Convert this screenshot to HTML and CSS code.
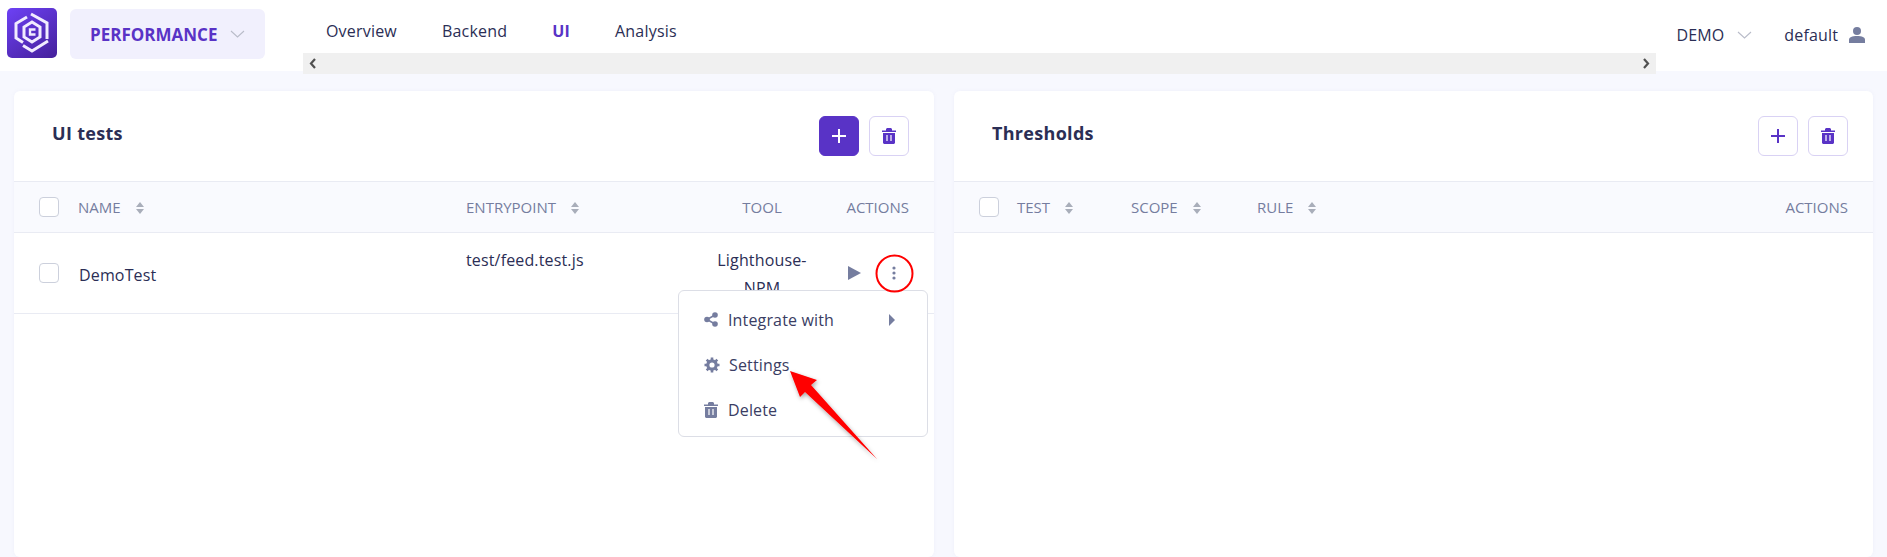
FILE: index.html
```html
<!DOCTYPE html>
<html lang="en">
  <head>
    <meta charset="UTF-8" />
    <meta name="viewport" content="width=device-width, initial-scale=1.0" />
    <title>UI tests</title>
    <link rel="stylesheet" href="styles.css">
  </head>
  <body>
    <header class="topbar">
      <div class="logo">
        <svg width="50" height="50" viewBox="0 0 50 50" fill="none" stroke="#f1ecff" stroke-width="3">
          <path d="M20 9 L9 15.500 V30 L16 34.500" />
          <path d="M24 6 L40 15 V31" />
          <path d="M16 37.500 L25 43 L41 33" />
          <path d="M25 14 L33 19 V29 L25 34 L17 29 V19 Z" />
          <path d="M28.500 21.500 H23 V26.500 H28.500" stroke-width="2.400" />
        </svg>
      </div>
      <div class="switcher">
        <span>PERFORMANCE</span>
        <svg class="chevron" width="15" height="8" viewBox="0 0 15 8"><path d="M1 1 L7.500 7 L14 1" /></svg>
      </div>
      <nav class="nav">
        <div class="nav-links">
          <a>Overview</a>
          <a>Backend</a>
          <a class="active">UI</a>
          <a>Analysis</a>
        </div>
        <div class="scrollbar">
          <svg width="10" height="11" viewBox="0 0 10 11"><path d="M7 1 L3 5.500 L7 10" /></svg>
          <svg width="10" height="11" viewBox="0 0 10 11"><path d="M3 1 L7 5.500 L3 10" /></svg>
        </div>
      </nav>
      <div class="topbar-right">
        <span class="project">DEMO</span>
        <svg class="chevron" width="15" height="8" viewBox="0 0 15 8"><path d="M1 1 L7.500 7 L14 1" /></svg>
        <span class="user">default</span>
        <svg width="16" height="16" viewBox="0 0 16 16" fill="#757d9f">
          <circle cx="8" cy="4" r="4" />
          <path d="M0 16 V13 C0 10 3 9 8 9 C13 9 16 10 16 13 V16 Z" />
        </svg>
      </div>
    </header>

    <main class="content">
      <section class="card tests">
        <div class="card-head">
          <h3>UI tests</h3>
          <div class="card-buttons">
            <button class="btn btn-primary">
              <svg width="16" height="16" viewBox="0 0 16 16"><path d="M8 1 V15 M1 8 H15" /></svg>
            </button>
            <button class="btn">
              <svg width="14" height="16" viewBox="0 0 14 16"><path d="M0 2.500 H4 V1 L5 0 H9 L10 1 V2.500 H14 V4 H0 Z M1 5 H13 V15 L12 16 H2 L1 15 Z" /><path class="gap" d="M5 7 V13 M9 7 V13" /></svg>
            </button>
          </div>
        </div>
        <div class="row thead tests-cols">
          <span class="check"></span>
          <span class="col-title">NAME
            <svg class="sort" width="8" height="12" viewBox="0 0 8 12"><path d="M4 0 L8 5 H0 Z M0 7 H8 L4 12 Z" /></svg>
          </span>
          <span class="col-title">ENTRYPOINT
            <svg class="sort" width="8" height="12" viewBox="0 0 8 12"><path d="M4 0 L8 5 H0 Z M0 7 H8 L4 12 Z" /></svg>
          </span>
          <span class="col-title center">TOOL</span>
          <span class="col-title right">ACTIONS</span>
        </div>
        <div class="row tbody tests-cols">
          <span class="check"></span>
          <span class="cell-name">DemoTest</span>
          <span class="cell-top">test/feed.test.js</span>
          <span class="cell-top center">Lighthouse-NPM</span>
          <span class="cell-actions">
            <svg width="13" height="14" viewBox="0 0 13 14" fill="#757d9f"><path d="M0 0 L13 7 L0 14 Z" /></svg>
            <svg width="4" height="14" viewBox="0 0 4 14" fill="#757d9f">
              <circle cx="2" cy="2" r="1.600" />
              <circle cx="2" cy="7" r="1.600" />
              <circle cx="2" cy="12" r="1.600" />
            </svg>
          </span>
          <ul class="menu">
            <li>
              <svg width="14" height="15" viewBox="0 0 14 15" fill="#757d9f">
                <circle cx="11" cy="3" r="2.800" />
                <circle cx="3" cy="7.500" r="2.800" />
                <circle cx="11" cy="12" r="2.800" />
                <path d="M3 7.500 L11 3 M3 7.500 L11 12" stroke="#757d9f" stroke-width="1.500" />
              </svg>
              <span>Integrate with</span>
              <svg class="submenu" width="6" height="12" viewBox="0 0 6 12" fill="#757d9f"><path d="M0 0 L6 6 L0 12 Z" /></svg>
            </li>
            <li>
              <svg class="gear" width="16" height="16" viewBox="0 0 16 16">
                <circle cx="8" cy="8" r="4.200" fill="none" stroke="#757d9f" stroke-width="3.200" />
                <path d="M8 0.500 V15.500 M0.500 8 H15.500 M2.700 2.700 L13.300 13.300 M13.300 2.700 L2.700 13.300" stroke="#757d9f" stroke-width="2.600" stroke-dasharray="3 9" />
              </svg>
              <span>Settings</span>
            </li>
            <li>
              <svg width="14" height="16" viewBox="0 0 14 16" fill="#757d9f"><path d="M0 2.500 H4 V1 L5 0 H9 L10 1 V2.500 H14 V4 H0 Z M1 5 H13 V15 L12 16 H2 L1 15 Z" /><path d="M5 7 V13 M9 7 V13" stroke="#fff" stroke-width="1.200" /></svg>
              <span>Delete</span>
            </li>
          </ul>
        </div>
      </section>

      <section class="card thresholds">
        <div class="card-head">
          <h3>Thresholds</h3>
          <div class="card-buttons">
            <button class="btn">
              <svg width="16" height="16" viewBox="0 0 16 16"><path d="M8 1 V15 M1 8 H15" /></svg>
            </button>
            <button class="btn">
              <svg width="14" height="16" viewBox="0 0 14 16"><path d="M0 2.500 H4 V1 L5 0 H9 L10 1 V2.500 H14 V4 H0 Z M1 5 H13 V15 L12 16 H2 L1 15 Z" /><path class="gap" d="M5 7 V13 M9 7 V13" /></svg>
            </button>
          </div>
        </div>
        <div class="row thead thresholds-cols">
          <span class="check"></span>
          <span class="col-title">TEST
            <svg class="sort" width="8" height="12" viewBox="0 0 8 12"><path d="M4 0 L8 5 H0 Z M0 7 H8 L4 12 Z" /></svg>
          </span>
          <span class="col-title">SCOPE
            <svg class="sort" width="8" height="12" viewBox="0 0 8 12"><path d="M4 0 L8 5 H0 Z M0 7 H8 L4 12 Z" /></svg>
          </span>
          <span class="col-title">RULE
            <svg class="sort" width="8" height="12" viewBox="0 0 8 12"><path d="M4 0 L8 5 H0 Z M0 7 H8 L4 12 Z" /></svg>
          </span>
          <span class="col-title right">ACTIONS</span>
        </div>
      </section>
    </main>

    <!-- red marks drawn on top of the screenshot -->
    <svg class="marks" width="1887" height="557" viewBox="0 0 1887 557">
      <defs>
        <filter id="arrowShadow" x="-20%" y="-20%" width="150%" height="150%">
          <feDropShadow dx="1" dy="2" stdDeviation="2" flood-color="#000" flood-opacity="0.35" />
        </filter>
      </defs>
      <circle cx="894.500" cy="273.500" r="18" fill="none" stroke="#f00" stroke-width="2" />
      <path d="M790 371 L817 380 L811 385 L877 459 L805 392 L800 397 Z" fill="#f00" filter="url(#arrowShadow)" />
    </svg>
  </body>
</html>
```

FILE: styles.css
```css
* {
  box-sizing: border-box;
}
html,
body {
  height: 100%;
}
body {
  margin: 0;
  overflow: hidden;
  font-family: "Open Sans", Arial, sans-serif;
  font-size: 16px;
  letter-spacing: 0.15px;
  color: #2b2e55;
  background-color: #f7f8fe;
}
.topbar {
  display: flex;
  align-items: flex-start;
  height: 71px;
  padding: 8px 22px 0 7px;
  background: white;
}
.logo {
  width: 50px;
  height: 50px;
  border-radius: 5px;
  background: linear-gradient(145deg, #6d41f5, #45209a);
}
.switcher {
  display: flex;
  align-items: center;
  gap: 13px;
  width: 195px;
  height: 50px;
  margin: 1px 0 0 13px;
  padding-left: 20px;
  border-radius: 6px;
  background: #f1f0fd;
  font-size: 17px;
  font-weight: 700;
  letter-spacing: 0;
  color: #5933c6;
}
.chevron path {
  fill: none;
  stroke: #b9bcc9;
  stroke-width: 1.100;
}
.nav {
  width: 1354px;
  height: 66px;
  margin-left: 38px;
}
.nav-links {
  display: flex;
  gap: 45px;
  height: 45px;
  padding: 12px 0 0 23px;
  line-height: 22px;
  letter-spacing: 0.2px;
}
.nav-links .active {
  font-weight: 700;
  color: #5933c6;
}
.scrollbar {
  display: flex;
  justify-content: space-between;
  align-items: center;
  height: 21px;
  padding: 0 5px;
  background: #f0f0f0;
  position: relative;
}
.scrollbar path {
  fill: none;
  stroke: #505050;
  stroke-width: 2.200;
}
.topbar-right {
  display: flex;
  align-items: center;
  flex: 1;
  height: 22px;
  margin-top: 16px;
  padding-left: 20px;
}
.project {
  margin-right: 13px;
}
.user {
  margin: 0 11px 0 32px;
}
.content {
  display: flex;
  gap: 20px;
  padding: 20px 14px 0;
}
.card {
  height: 466px;
  border-radius: 6px;
  background: white;
  box-shadow: 0 0 4px rgba(120, 120, 180, 0.06);
}
.tests {
  width: 920px;
}
.thresholds {
  width: 919px;
}
.card-head {
  display: flex;
  justify-content: space-between;
  align-items: center;
  height: 90px;
  padding: 0 25px 0 38px;
}
.card-head h3 {
  margin: 0 0 6px;
  font-size: 18px;
  font-weight: 700;
  letter-spacing: 0.3px;
  color: #2b2e55;
}
.card-buttons {
  display: flex;
  gap: 10px;
}
.btn {
  display: flex;
  justify-content: center;
  align-items: center;
  width: 40px;
  height: 40px;
  padding: 0;
  border: 1px solid #d9d2f4;
  border-radius: 6px;
  background: white;
}
.btn svg {
  fill: #5933c6;
}
.btn svg path {
  stroke: none;
}
.btn svg[width="16"] path {
  stroke: #5933c6;
  stroke-width: 2;
}
.btn svg .gap {
  stroke: white;
  stroke-width: 1.200;
}
.btn-primary {
  border-color: #5933c6;
  background: #5933c6;
}
.btn-primary svg[width="16"] path {
  stroke: white;
}
.row {
  display: grid;
  padding: 0 25px;
}
.tests-cols {
  grid-template-columns: 39px 388px 240px 112px 91px;
}
.thresholds-cols {
  grid-template-columns: 38px 114px 126px 1fr auto;
}
.thead {
  align-items: center;
  height: 52px;
  border-top: 1px solid #e9ebf3;
  border-bottom: 1px solid #e9ebf3;
  background: #f9fafe;
}
.tbody {
  position: relative;
  height: 81px;
  align-items: center;
  border-bottom: 1px solid #e9ebf3;
}
.check {
  width: 20px;
  height: 20px;
  border: 1px solid #ccd0dc;
  border-radius: 4px;
  background: white;
}
.col-title {
  font-size: 15px;
  font-weight: 400;
  letter-spacing: 0;
  color: #757d9f;
}
.sort {
  margin-left: 11px;
  fill: #a9aeba;
  vertical-align: -1px;
}
.center {
  text-align: center;
}
.right {
  text-align: right;
}
.cell-name {
  margin: 4px 0 0 1px;
}
.cell-top {
  align-self: start;
  padding-top: 13px;
  line-height: 28px;
}
.cell-actions {
  display: flex;
  justify-content: flex-end;
  align-items: center;
  gap: 31px;
  padding-right: 13px;
}
.menu {
  position: absolute;
  top: 57px;
  right: 6px;
  width: 250px;
  height: 147px;
  margin: 0;
  padding: 6px 0;
  list-style: none;
  border: 1px solid #dcdee6;
  border-radius: 6px;
  background: white;
  color: #3a3d63;
}
.menu li {
  display: flex;
  align-items: center;
  gap: 10px;
  height: 45px;
  padding: 0 25px;
}
.menu .gear {
  margin-right: -1px;
}
.menu .submenu {
  margin-left: auto;
  margin-right: 7px;
}
.marks {
  position: absolute;
  top: 0;
  left: 0;
  pointer-events: none;
}
```
